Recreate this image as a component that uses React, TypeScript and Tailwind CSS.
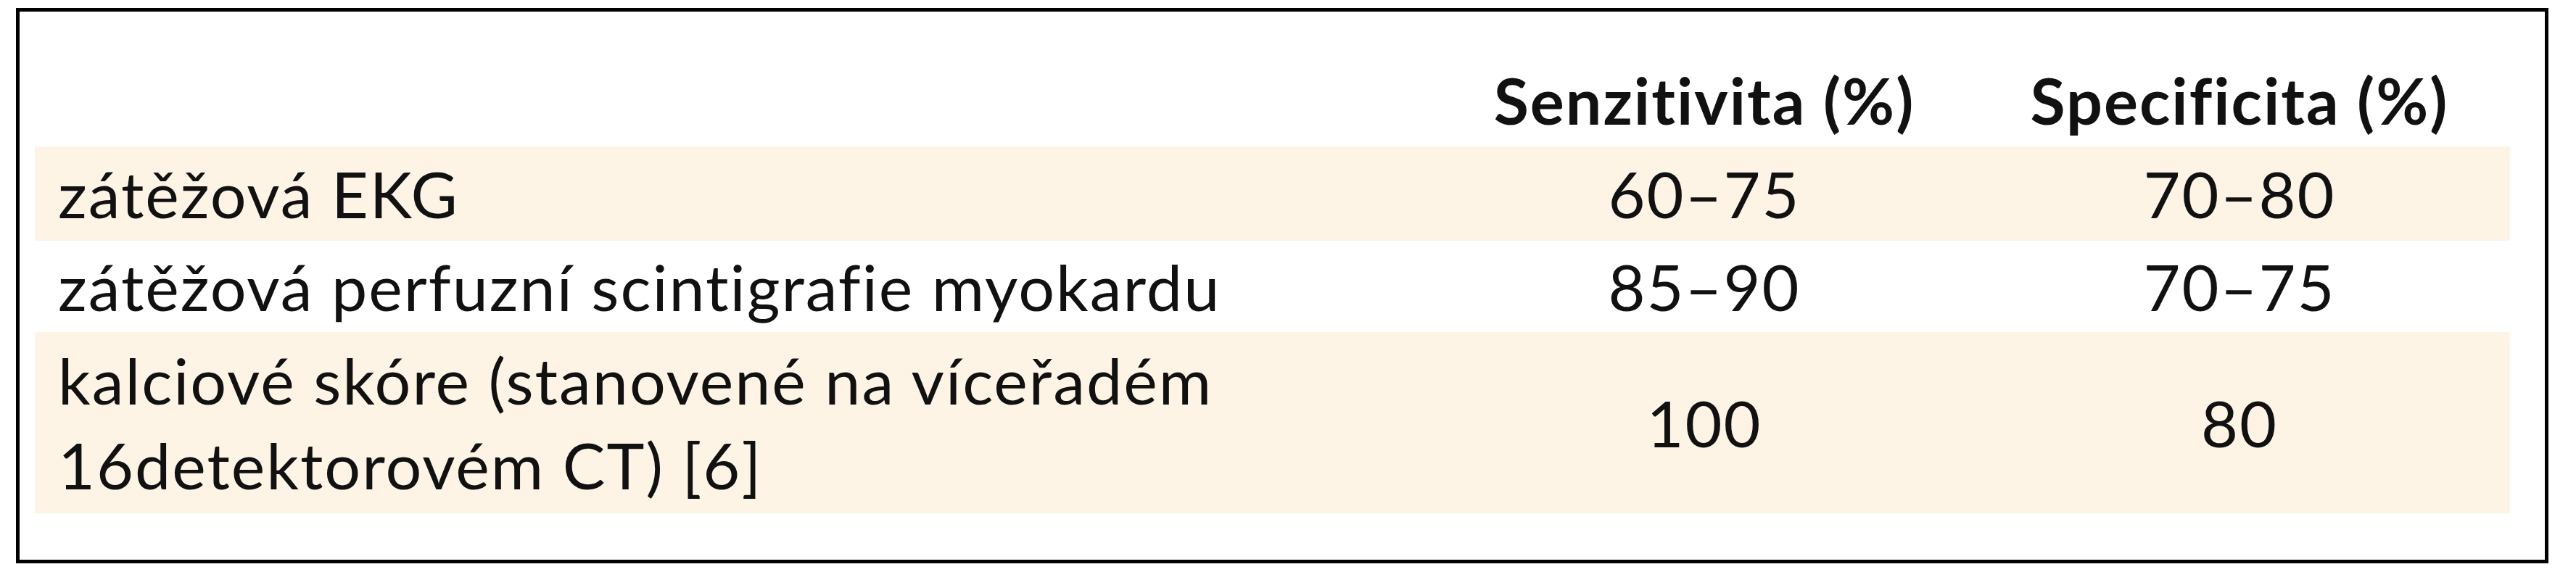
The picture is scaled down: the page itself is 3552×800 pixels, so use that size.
import React from "react";

interface Row {
  label: string[];
  sens: string;
  spec: string;
  height: string;
  shaded: boolean;
}

const rows: Row[] = [
  { label: ["zátěžová EKG"], sens: "60–75", spec: "70–80", height: "h-[130px]", shaded: true },
  { label: ["zátěžová perfuzní scintigrafie myokardu"], sens: "85–90", spec: "70–75", height: "h-[126px]", shaded: false },
  {
    label: ["kalciové skóre (stanovené na víceřadém", "16detektorovém CT) [6]"],
    sens: "100",
    spec: "80",
    height: "h-[250px]",
    shaded: true,
  },
];

const App: React.FC = () => {
  return (
    <div className="w-[3552px] h-[800px] bg-white pt-[11px] pl-[22px] font-['Lato','Noto_Sans',sans-serif] text-[#111] tracking-[2px]">
      <div className="w-[3492px] h-[766px] border-[5px] border-black pl-[21px] pr-[48px]">
        {/* header */}
        <div className="flex h-[186px] items-end pb-[20px] text-[88px] leading-none font-bold">
          <div className="w-[1937px]" />
          <div className="w-[730px] text-center">Senzitivita (%)</div>
          <div className="w-[746px] text-center">Specificita (%)</div>
        </div>

        {rows.map((row) => (
          <div
            key={row.sens + row.spec}
            className={`flex items-center text-[88px] leading-[117px] ${row.height} ${row.shaded ? "bg-[#fef4e6]" : "bg-white"}`}
          >
            <div className="w-[1937px] pl-[32px]">
              {row.label.map((line) => (
                <div key={line} className="whitespace-nowrap">
                  {line}
                </div>
              ))}
            </div>
            <div className="w-[730px] text-center">{row.sens}</div>
            <div className="w-[746px] text-center">{row.spec}</div>
          </div>
        ))}
      </div>
    </div>
  );
};

export default App;
